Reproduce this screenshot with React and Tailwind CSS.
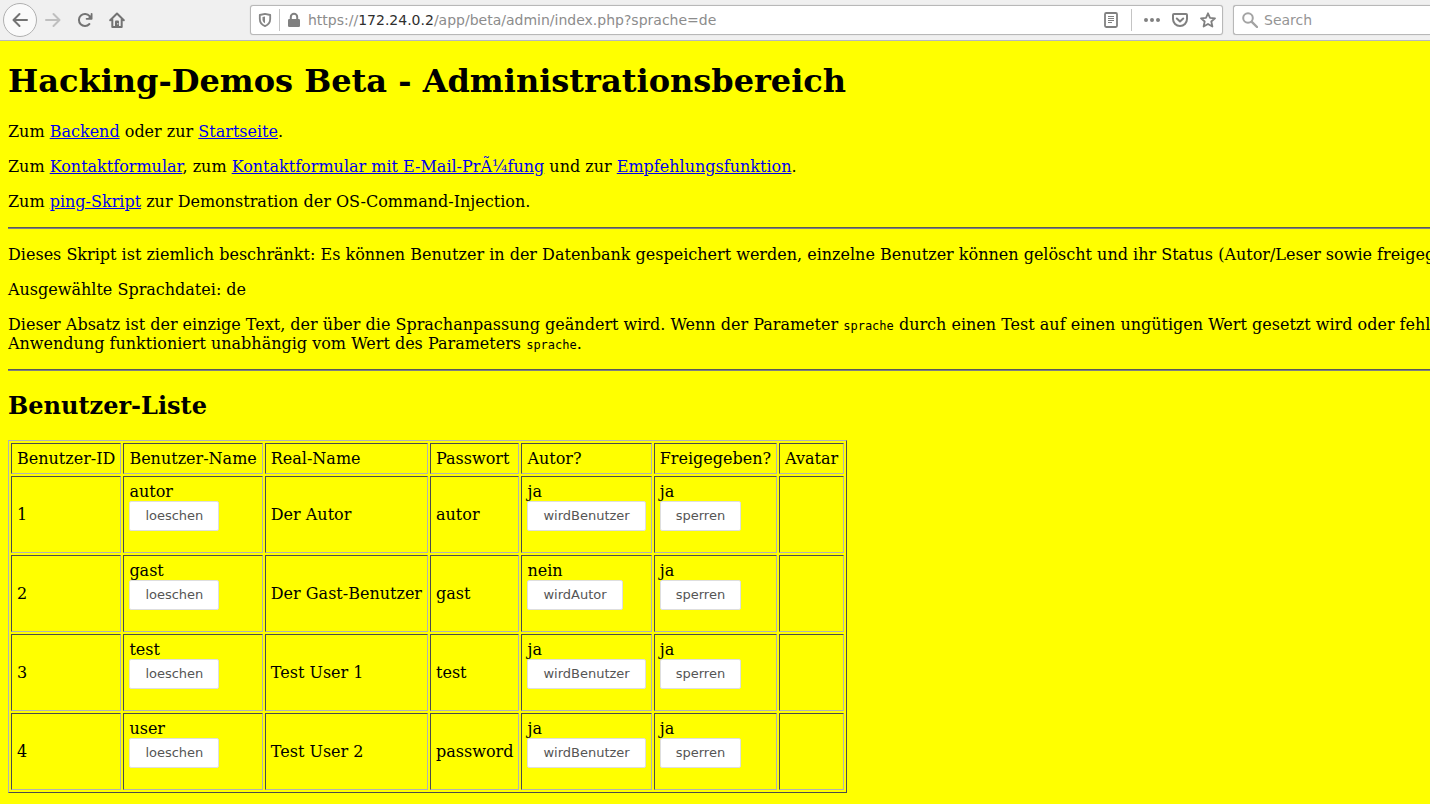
import React from "react";

const users = [
  { id: 1, name: "autor", real: "Der Autor", password: "autor", author: true },
  { id: 2, name: "gast", real: "Der Gast-Benutzer", password: "gast", author: false },
  { id: 3, name: "test", real: "Test User 1", password: "test", author: true },
  { id: 4, name: "user", real: "Test User 2", password: "password", author: true },
];

const columns = ["Benutzer-ID", "Benutzer-Name", "Real-Name", "Passwort", "Autor?", "Freigegeben?", "Avatar"];

function Icon({ children, className = "text-[#737373]" }) {
  return (
    <svg width="16" height="16" viewBox="0 0 16 16" fill="none" stroke="currentColor" strokeWidth="2" strokeLinecap="round" strokeLinejoin="round" className={"block shrink-0 " + className} aria-hidden="true">
      {children}
    </svg>
  );
}

function ToolButton({ label, children, disabled }) {
  return (
    <button type="button" aria-label={label} disabled={disabled} className="flex h-8 w-8 items-center justify-center">
      {children}
    </button>
  );
}

function Toolbar() {
  return (
    <header className="flex h-[41px] items-center border-b border-[#b8b8bc] bg-[#f0f0f0] pl-[3px] font-['DejaVu_Sans',sans-serif] text-sm">
      <nav aria-label="Navigation" className="flex items-center">
        <button type="button" aria-label="Back" className="flex h-[34px] w-[34px] items-center justify-center rounded-full border border-[#b0b0b0] bg-[#fafafa]">
          <Icon>
            <path d="M15 8H2M7.500 2 1.500 8l6 6" />
          </Icon>
        </button>
        <ToolButton label="Forward" disabled>
          <Icon className="text-[#bfbfbf]">
            <path d="M1 8h13M8.500 2l6 6-6 6" />
          </Icon>
        </ToolButton>
        <ToolButton label="Reload">
          <Icon>
            <path d="M12.400 12A6 6 0 1 1 12.600 4.200" />
            <path d="M14.600 1.800v5H9.600" strokeWidth="1.800" />
            <path d="M14.600 2.500v4.300h-4.300z" fill="currentColor" stroke="none" />
          </Icon>
        </ToolButton>
        <ToolButton label="Home">
          <Icon>
            <path d="M1.200 8.300 8 1.500l6.800 6.800M3.300 7.500V15h9.400V7.500" />
            <path d="M6 14V9.500a1 1 0 0 1 1-1h2a1 1 0 0 1 1 1V14z" fill="currentColor" stroke="none" />
            <path d="M8.800 11.500v.6" stroke="#f0f0f0" strokeWidth="1" />
          </Icon>
        </ToolButton>
      </nav>

      <div className="ml-[117px] flex h-[30px] min-w-0 flex-1 items-center rounded-[3px] border border-[#b8b8b8] bg-white pr-[6px] pl-[6px] shadow-[0_0_1px_#b8b8b8]">
        <button type="button" aria-label="Tracking protection" className="mr-[6px]">
          <Icon className="text-[#858585]">
            <path d="M8 1.900 13.200 3v4c0 3.500-2 5.800-5.200 7.100C4.800 12.800 2.800 10.500 2.800 7V3z" strokeWidth="1.800" />
            <path d="M8 4.500v6.800C6.200 10.200 5.500 8.800 5.500 7.200V5z" fill="currentColor" stroke="none" />
          </Icon>
        </button>
        <span className="h-[22px] w-px bg-[#c4c4c4]" />
        <button type="button" aria-label="Connection" className="ml-[6px]">
          <Icon className="text-[#808080]">
            <rect x="2" y="7" width="12" height="8" rx="1.300" fill="currentColor" stroke="none" />
            <path d="M4.800 8V5a3.200 3.200 0 0 1 6.400 0v3" />
          </Icon>
        </button>
        <div role="textbox" aria-label="Address" tabIndex={0} className="ml-[6px] min-w-0 flex-1 truncate text-[#8c8c8c]">
          https://<span className="text-[#2e2e2e]">172.24.0.2</span>/app/beta/admin/index.php?sprache=de
        </div>
        <button type="button" aria-label="Reader view" className="mr-[12px]">
          <Icon className="text-[#808080]">
            <rect x="2" y="1" width="12" height="14" rx="1.200" strokeWidth="1.800" />
            <path d="M5 4.500h6M5 6.500h6M5 8.500h6M5 10.500h4" strokeWidth="1" strokeLinecap="butt" />
          </Icon>
        </button>
        <span className="h-[22px] w-px bg-[#c4c4c4]" />
        <button type="button" aria-label="Page actions" className="ml-[12px]">
          <Icon className="text-[#808080]">
            <path d="M2 8h.01M8 8h.01M14 8h.01" strokeWidth="4" />
          </Icon>
        </button>
        <button type="button" aria-label="Save to Pocket" className="ml-[12px]">
          <Icon className="text-[#808080]">
            <path d="M2 2h12a1 1 0 0 1 1 1v4a7 7 0 0 1-14 0V3a1 1 0 0 1 1-1z" />
            <path d="M4.800 6.500 8 9.500l3.200-3" />
          </Icon>
        </button>
        <button type="button" aria-label="Bookmark" className="ml-[12px]">
          <Icon className="text-[#808080]">
            <path d="m8 1.300 2 4.500 5 .5-3.700 3.200 1.100 5L8 11.900l-4.400 2.600 1.100-5L1 6.300l5-.5z" strokeWidth="1.800" />
          </Icon>
        </button>
      </div>

      <label className="ml-[10px] flex h-[30px] w-[197px] items-center rounded-l-[3px] border border-r-0 border-[#b8b8b8] bg-white pl-[8px] shadow-[0_0_1px_#b8b8b8]">
        <Icon className="text-[#a3a3a3]">
          <circle cx="6" cy="6" r="4.800" />
          <path d="m9.800 9.800 5.200 5.200" strokeWidth="2.400" />
        </Icon>
        <input type="search" aria-label="Search" placeholder="Search" className="ml-[6px] w-full min-w-0 bg-transparent outline-none placeholder:text-[#959595]" />
      </label>
    </header>
  );
}

function Link({ children }) {
  return (
    <a href="#" className="text-[#0000ee] underline">
      {children}
    </a>
  );
}

function Rule() {
  return <hr className="my-4 h-[2px] border-t border-b border-t-[#5a5a5a] border-b-[#808080]" />;
}

function Code({ children }) {
  return <code className="font-['DejaVu_Sans_Mono',monospace] text-[12px] leading-none">{children}</code>;
}

function Cell({ as: Tag = "td", children }) {
  return (
    <Tag className="border border-t-[#4c4c4c] border-r-[#b2b2b2] border-b-[#b2b2b2] border-l-[#4c4c4c] p-[5px] text-left align-middle font-normal">
      {children}
    </Tag>
  );
}

function ActionCell({ text, action }) {
  return (
    <Cell>
      {text}
      <form className="mb-4" onSubmit={(e) => e.preventDefault()}>
        <button type="submit" className="block h-[30px] rounded-[2px] border border-[#dedede] bg-white px-[15px] font-['DejaVu_Sans',sans-serif] text-[13px] leading-4 text-[#555555]">
          {action}
        </button>
      </form>
    </Cell>
  );
}

export default function App() {
  return (
    <div className="min-h-screen overflow-hidden bg-[#ffff00] text-black">
      <Toolbar />
      <main className="pt-[21px] pb-[11px] pl-2 font-['DejaVu_Serif',serif] text-base leading-[19px] whitespace-nowrap">
        <h1 className="mb-[22px] text-[32px] leading-[38px] font-bold">Hacking-Demos Beta - Administrationsbereich</h1>
        <p className="mb-4">
          Zum <Link>Backend</Link> oder zur <Link>Startseite</Link>.
        </p>
        <p className="mb-4">
          Zum <Link>Kontaktformular</Link>, zum <Link>Kontaktformular mit E-Mail-PrÃ¼fung</Link> und zur <Link>Empfehlungsfunktion</Link>.
        </p>
        <p>
          Zum <Link>ping-Skript</Link> zur Demonstration der OS-Command-Injection.
        </p>
        <Rule />
        <p className="mb-4 overflow-hidden">
          Dieses Skript ist ziemlich beschränkt: Es können Benutzer in der Datenbank gespeichert werden, einzelne Benutzer können gelöscht und ihr Status (Autor/Leser sowie freigeg
        </p>
        <p className="mb-4">Ausgewählte Sprachdatei: de</p>
        <p className="overflow-hidden">
          Dieser Absatz ist der einzige Text, der über die Sprachanpassung geändert wird. Wenn der Parameter <Code>sprache</Code> durch einen Test auf einen ungütigen Wert gesetzt wird oder fehl
          <br />
          Anwendung funktioniert unabhängig vom Wert des Parameters <Code>sprache</Code>.
        </p>
        <Rule />
        <h2 className="mt-5 mb-5 text-2xl leading-[29px] font-bold">Benutzer-Liste</h2>
        <table className="border-separate border-spacing-[2px] border border-t-[#b2b2b2] border-r-[#4c4c4c] border-b-[#4c4c4c] border-l-[#b2b2b2]">
          <thead>
            <tr>
              {columns.map((c) => (
                <Cell as="th" key={c}>{c}</Cell>
              ))}
            </tr>
          </thead>
          <tbody>
            {users.map((u) => (
              <tr key={u.id}>
                <Cell>{u.id}</Cell>
                <ActionCell text={u.name} action="loeschen" />
                <Cell>{u.real}</Cell>
                <Cell>{u.password}</Cell>
                <ActionCell text={u.author ? "ja" : "nein"} action={u.author ? "wirdBenutzer" : "wirdAutor"} />
                <ActionCell text="ja" action="sperren" />
                <Cell />
              </tr>
            ))}
          </tbody>
        </table>
      </main>
    </div>
  );
}
